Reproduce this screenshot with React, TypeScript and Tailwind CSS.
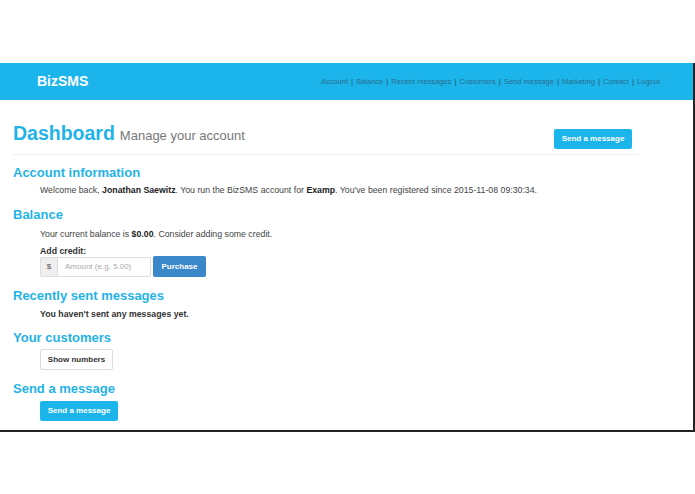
import React from "react";

const navLinks = [
  "Account",
  "Balance",
  "Recent messages",
  "Customers",
  "Send message",
  "Marketing",
  "Contact",
  "Logout",
];

const SectionHeading = ({ children, className = "" }: { children: React.ReactNode; className?: string }) => (
  <h2 className={`text-[13px] leading-[18px] font-bold text-[#1fb3e8] ${className}`}>{children}</h2>
);

const Dashboard = () => {
  return (
    <div className="pl-[13px]">
      {/* Page header */}
      <div className="mt-[21px] mr-[55px] flex items-end justify-between border-b border-[#eeeeee] pb-[6px]">
        <div className="leading-[24px]">
          <span className="text-[19.5px] font-bold text-[#1fb3e8]">Dashboard</span>
          <span className="ml-[5px] text-[13px] text-[#777]">Manage your account</span>
        </div>
        <button className="mr-[6px] mb-[-1px] h-[20px] w-[78px] rounded-[2px] bg-[#1cb5eb] text-[8px] font-bold text-white">
          Send a message
        </button>
      </div>

      {/* Account information */}
      <SectionHeading className="mt-[9px]">Account information</SectionHeading>
      <p className="mt-[2px] pl-[27px] text-[8.75px] leading-[12px] text-[#444]">
        Welcome back, <b className="text-[#222]">Jonathan Saewitz</b>. You run the BizSMS account for{" "}
        <b className="text-[#222]">Examp</b>. You've been registered since 2015-11-08 09:30:34.
      </p>

      {/* Balance */}
      <SectionHeading className="mt-[10px]">Balance</SectionHeading>
      <div className="pl-[27px]">
        <p className="mt-[4px] text-[8.75px] leading-[12px] text-[#444]">
          Your current balance is <b className="text-[#222]">$0.00</b>. Consider adding some credit.
        </p>
        <p className="mt-[5px] text-[8.75px] font-bold leading-[12px] text-[#333]">Add credit:</p>
        <div className="mt-[-1px] flex items-center">
          <div className="flex h-[20px]">
            <span className="flex w-[18px] items-center justify-center rounded-l-[2px] border border-[#ddd] bg-[#eeeeee] text-[8px] text-[#555]">
              $
            </span>
            <input
              className="w-[93px] rounded-r-[2px] border border-l-0 border-[#ddd] px-[7px] text-[8px] text-[#555] outline-none placeholder:text-[#aaa]"
              placeholder="Amount (e.g. 5.00)"
            />
          </div>
          <button className="ml-[2px] h-[21px] w-[53px] rounded-[2px] bg-[#3a87c9] text-[8px] font-bold text-white">
            Purchase
          </button>
        </div>
      </div>

      {/* Recently sent messages */}
      <SectionHeading className="mt-[10px]">Recently sent messages</SectionHeading>
      <p className="mt-[3px] pl-[27px] text-[8.75px] font-bold leading-[12px] text-[#333]">
        You haven't sent any messages yet.
      </p>

      {/* Your customers */}
      <SectionHeading className="mt-[9px]">Your customers</SectionHeading>
      <div className="mt-[2px] flex pl-[27px]">
        <button className="h-[21px] w-[73px] rounded-[2px] border border-[#dddddd] bg-white text-[8px] font-bold text-[#333]">
          Show numbers
        </button>
      </div>

      {/* Send a message */}
      <SectionHeading className="mt-[10px]">Send a message</SectionHeading>
      <div className="mt-[3px] flex pl-[27px]">
        <button className="h-[20px] w-[78px] rounded-[2px] bg-[#1cb5eb] text-[8px] font-bold text-white">
          Send a message
        </button>
      </div>
    </div>
  );
};

export default function App() {
  return (
    <div className="h-[494px] w-[695px] overflow-hidden bg-white font-['Liberation_Sans',Arial,sans-serif]">
      <div className="h-[63px]" />
      <div className="h-[369px] w-[695px] border-r-2 border-b-2 border-[#222]">
        {/* Navbar */}
        <nav className="flex h-[37px] items-center justify-between bg-[#1cb5eb] pl-[37px] pr-[33px]">
          <span className="text-[14px] font-bold text-white">BizSMS</span>
          <ul className="flex text-[7.5px] text-[#2a6d8c]">
            {navLinks.map((link, i) => (
              <li key={link} className="flex items-center">
                <span>{link}</span>
                {i < navLinks.length - 1 && <span className="mx-[3px] font-bold">|</span>}
              </li>
            ))}
          </ul>
        </nav>

        <Dashboard />
      </div>
    </div>
  );
}
